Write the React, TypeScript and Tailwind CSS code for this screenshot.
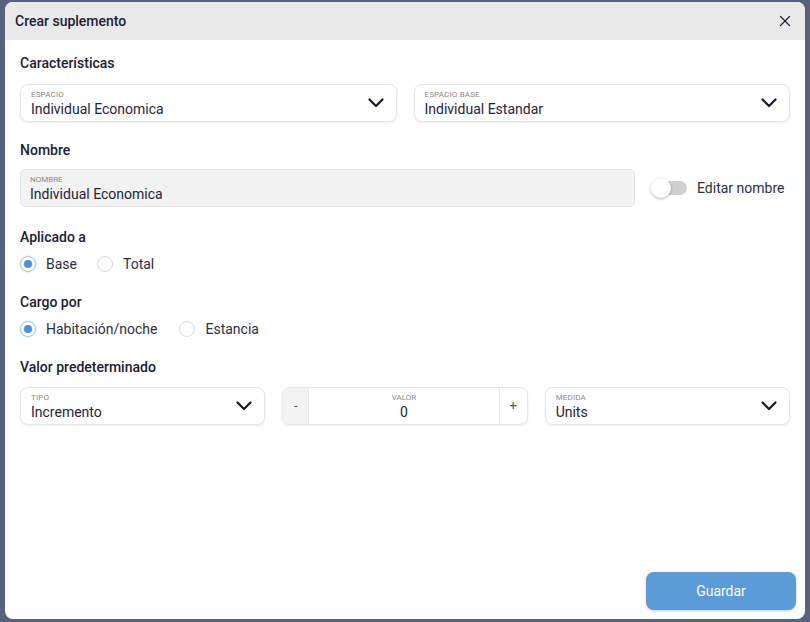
import { X } from 'lucide-react'

function Chevron() {
  return (
    <svg width="16" height="10" viewBox="0 0 16 10" fill="none" className="shrink-0">
      <path d="M1.5 1.5 8 8l6.5-6.5" stroke="#111827" strokeWidth="2.2" strokeLinecap="round" strokeLinejoin="round" />
    </svg>
  )
}

function Select({ label, value }: { label: string; value: string }) {
  return (
    <div className="flex h-[38px] min-w-0 items-center justify-between rounded-lg border border-[#e6e6e6] bg-white pl-[10px] pr-[12px] shadow-[0_1px_3px_rgba(0,0,0,0.08)]">
      <div className="flex flex-col leading-none">
        <span className="text-[8px] uppercase tracking-[0.02em] text-[#8a8a8a]">{label}</span>
        <span className="mt-[3px] text-[14px] text-[#1f2437]">{value}</span>
      </div>
      <Chevron />
    </div>
  )
}

function Radio({ label, checked }: { label: string; checked?: boolean }) {
  return (
    <label className="flex h-[20px] items-center gap-[10px]">
      <span
        className={`flex h-[16px] w-[16px] items-center justify-center rounded-full border ${
          checked ? 'border-[#a9c9ee] shadow-[0_0_0_1px_rgba(74,144,226,0.15)]' : 'border-[#d5dbe3]'
        } bg-white`}
      >
        {checked && <span className="h-[8px] w-[8px] rounded-full bg-[#4a90e2]" />}
      </span>
      <span className="text-[14px] leading-[20px] text-[#2b2f40]">{label}</span>
    </label>
  )
}

function SectionTitle({ children, className = '' }: { children: string; className?: string }) {
  return <h3 className={`text-[14px] font-medium leading-[20px] text-[#1c2033] ${className}`}>{children}</h3>
}

export default function App() {
  return (
    <div
      className="h-[622px] w-[810px] overflow-hidden bg-[#58627c] pl-[5px] pr-[5px] pt-[2px]"
      style={{ fontFamily: 'Roboto, "Liberation Sans", sans-serif' }}
    >
      <div className="flex h-[617px] w-[800px] flex-col overflow-hidden rounded-lg bg-white">
        {/* Header */}
        <div className="flex h-[38px] shrink-0 items-center justify-between bg-[#e9e9e9] pl-[10px] pr-[11px]">
          <span className="text-[14px] font-medium text-[#1c2033]">Crear suplemento</span>
          <X className="h-[18px] w-[18px] text-[#1c2033]" strokeWidth={1.6} />
        </div>

        <div className="flex flex-1 flex-col px-[15px] pt-[13px]">
          <SectionTitle>Características</SectionTitle>
          <div className="mt-[11px] grid grid-cols-2 gap-[17px]">
            <Select label="Espacio" value="Individual Economica" />
            <Select label="Espacio base" value="Individual Estandar" />
          </div>

          <SectionTitle className="mt-[18px]">Nombre</SectionTitle>
          <div className="mt-[9px] flex items-center">
            <div className="flex h-[38px] w-[615px] flex-col justify-center rounded-[5px] border border-[#e2e2e2] bg-[#f2f2f2] pl-[9px] leading-none">
              <span className="text-[8px] uppercase text-[#8a8a8a]">Nombre</span>
              <span className="mt-[3px] text-[14px] text-[#1f2437]">Individual Economica</span>
            </div>
            <div className="ml-[16px] flex items-center gap-[10px]">
              <div className="relative h-[14px] w-[36px]">
                <div className="absolute left-[6px] right-0 top-0 h-[14px] rounded-full bg-[#cfcfcf]" />
                <div className="absolute left-0 top-[-3px] h-[20px] w-[20px] rounded-full bg-white shadow-[0_1px_3px_rgba(0,0,0,0.3)]" />
              </div>
              <span className="text-[14px] text-[#2b2f40]">Editar nombre</span>
            </div>
          </div>

          <SectionTitle className="mt-[20px]">Aplicado a</SectionTitle>
          <div className="mt-[7px] flex items-center gap-[20px]">
            <Radio label="Base" checked />
            <Radio label="Total" />
          </div>

          <SectionTitle className="mt-[18px]">Cargo por</SectionTitle>
          <div className="mt-[7px] flex items-center gap-[22px]">
            <Radio label="Habitación/noche" checked />
            <Radio label="Estancia" />
          </div>

          <SectionTitle className="mt-[18px]">Valor predeterminado</SectionTitle>
          <div className="mt-[10px] grid grid-cols-3 gap-[17px]">
            <Select label="Tipo" value="Incremento" />
            <div className="flex h-[38px] min-w-0 overflow-hidden rounded-lg border border-[#e6e6e6] bg-white shadow-[0_1px_3px_rgba(0,0,0,0.08)]">
              <div className="flex w-[26px] items-center justify-center border-r border-[#e6e6e6] bg-[#f3f3f3] text-[13px] text-[#555]">-</div>
              <div className="flex flex-1 flex-col items-center justify-center leading-none">
                <span className="text-[8px] uppercase text-[#8a8a8a]">Valor</span>
                <span className="mt-[3px] text-[14px] text-[#1f2437]">0</span>
              </div>
              <div className="flex w-[28px] items-center justify-center border-l border-[#e6e6e6] text-[13px] text-[#555]">+</div>
            </div>
            <Select label="Medida" value="Units" />
          </div>

          <div className="mt-auto flex justify-end pb-[9px]">
            <button className="mr-[-6px] h-[38px] w-[150px] rounded-lg bg-[#5a9bd8] text-[14px] text-white shadow-[0_1px_3px_rgba(0,0,0,0.2)]">
              Guardar
            </button>
          </div>
        </div>
      </div>
    </div>
  )
}
